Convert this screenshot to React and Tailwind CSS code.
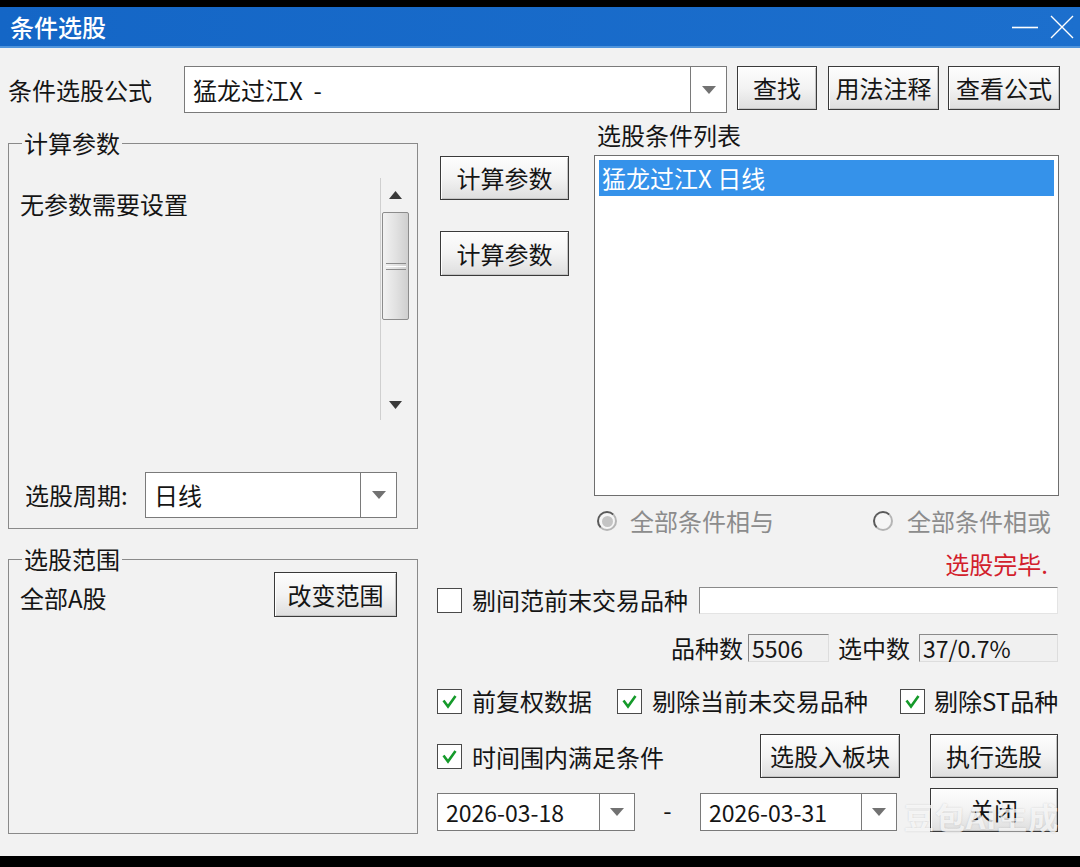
import React from "react";

function Btn({ children, className = "" }) {
  return (
    <div
      className={`flex items-center justify-center border border-[#3a3a3a] bg-gradient-to-b from-[#fdfdfd] via-[#f3f3f3] to-[#dedede] shadow-[inset_1px_1px_0_#ffffff,inset_-1px_-1px_0_#c4c4c4] text-[24px] leading-none text-[#151515] ${className}`}
    >
      {children}
    </div>
  );
}

function Arrow() {
  return (
    <svg width="14" height="8" viewBox="0 0 14 8">
      <path d="M0 0h14L7 8z" fill="#727272" />
    </svg>
  );
}

function Combo({ value, className = "", arrowW = "w-[36px]", textCls = "text-[24px]" }) {
  return (
    <div className={`flex border border-[#7a7a7a] bg-white ${className}`}>
      <div className={`flex-1 flex items-center pl-[8px] whitespace-pre ${textCls} text-[#151515]`}>{value}</div>
      <div className={`${arrowW} border-l border-[#7a7a7a] flex items-center justify-center`}>
        <Arrow />
      </div>
    </div>
  );
}

function Check({ checked }) {
  return (
    <div className="w-[25px] h-[25px] shrink-0 border border-[#4a4a4a] bg-white flex items-center justify-center">
      {checked && (
        <svg width="17" height="15" viewBox="0 0 17 15">
          <path d="M2.5 6.5L7 12.5L14.5 2" stroke="#159a2a" strokeWidth="2.6" fill="none" strokeLinejoin="miter" />
        </svg>
      )}
    </div>
  );
}

function Radio({ dot }) {
  return (
    <div className="w-[20px] h-[20px] shrink-0 rounded-full border-2 border-t-[#5a5a5a] border-l-[#5a5a5a] border-r-[#b5b5b5] border-b-[#b5b5b5] bg-[#f6f6f6] flex items-center justify-center">
      {dot && <div className="w-[11px] h-[11px] rounded-full bg-[#c4c4c4]" />}
    </div>
  );
}

export default function App() {
  return (
    <div className="relative w-[1080px] h-[867px] bg-black flex flex-col font-['Noto_Sans_CJK_SC','Noto_Sans',sans-serif] text-[#151515]">
      <div className="h-[7px] shrink-0" />
      {/* Title bar */}
      <div className="h-[41px] shrink-0 bg-gradient-to-r from-[#1466c6] to-[#1c6fcd] border-b-2 border-[#4f94dc] flex items-center justify-between pl-[10px] pr-[6px]">
        <span className="text-white text-[24px] leading-none font-medium">条件选股</span>
        <div className="flex items-center gap-[12px]">
          <svg width="26" height="24" viewBox="0 0 26 24">
            <path d="M0 12.5h26" stroke="#ffffff" strokeWidth="1.6" />
          </svg>
          <svg width="24" height="24" viewBox="0 0 24 24">
            <path d="M1 1L23 23M23 1L1 23" stroke="#ffffff" strokeWidth="1.4" />
          </svg>
        </div>
      </div>

      {/* Body */}
      <div className="h-[808px] shrink-0 bg-[#f2f2f2] pl-[8px] text-[24px] leading-[32px]">
        {/* Row 1 */}
        <div className="mt-[18px] h-[47px] flex items-start">
          <div className="w-[176px] h-[47px] flex items-center">条件选股公式</div>
          <Combo value={"猛龙过江X\u00a0\u00a0-"} className="w-[543px] h-[47px]" />
          <Btn className="ml-[10px] w-[80px] h-[44px]">查找</Btn>
          <Btn className="ml-[11px] w-[111px] h-[44px]">用法注释</Btn>
          <Btn className="ml-[9px] w-[112px] h-[44px]">查看公式</Btn>
        </div>

        <div className="flex">
          {/* Left column */}
          <div className="w-[410px] flex flex-col">
            <fieldset className="mt-[16px] h-[400px] border border-[#8a8a8a] pl-[11px]">
              <legend className="ml-[2px] px-[2px] leading-[28px]">计算参数</legend>
              <div className="mt-[21px] h-[242px] flex">
                <div className="flex-1 pt-[10px]">无参数需要设置</div>
                <div className="w-[30px] mr-[7px] border-l border-[#cfcfcf] flex flex-col">
                  <div className="h-[34px] flex items-center justify-center">
                    <svg width="13" height="8" viewBox="0 0 13 8">
                      <path d="M0 8h13L6.5 0z" fill="#3a3a3a" />
                    </svg>
                  </div>
                  <div className="mx-[1px] h-[108px] rounded-[2px] border border-[#8c8c8c] bg-gradient-to-r from-[#f2f2f2] via-[#e2e2e2] to-[#cfcfcf] flex flex-col items-center justify-center gap-[2px]">
                    <div className="w-[20px] h-[1px] bg-[#8c8c8c]" />
                    <div className="w-[20px] h-[1px] bg-[#ffffff]" />
                    <div className="w-[20px] h-[1px] bg-[#8c8c8c]" />
                  </div>
                  <div className="flex-1" />
                  <div className="h-[30px] flex items-center justify-center">
                    <svg width="13" height="8" viewBox="0 0 13 8">
                      <path d="M0 0h13L6.5 8z" fill="#3a3a3a" />
                    </svg>
                  </div>
                </div>
              </div>
              <div className="mt-[52px] h-[46px] flex items-center">
                <div className="ml-[5px] w-[120px]">选股周期:</div>
                <Combo value="日线" className="w-[252px] h-[46px]" />
              </div>
            </fieldset>

            <fieldset className="mt-[16px] h-[289px] border border-[#8a8a8a] pl-[11px]">
              <legend className="ml-[2px] px-[2px] leading-[28px]">选股范围</legend>
              <div className="flex items-start justify-between">
                <div className="mt-[9px]">全部A股</div>
                <Btn className="-mt-[1px] mr-[20px] w-[123px] h-[45px]">改变范围</Btn>
              </div>
            </fieldset>
          </div>

          {/* Right column */}
          <div className="ml-[19px] w-[622px] flex flex-col">
            <div className="flex">
              <div className="ml-[3px] w-[129px] flex flex-col">
                <Btn className="mt-[43px] h-[44px]">计算参数</Btn>
                <Btn className="mt-[31px] h-[45px]">计算参数</Btn>
              </div>
              <div className="ml-[25px] w-[465px] flex flex-col">
                <div className="mt-[6px] h-[32px] pl-[3px]">选股条件列表</div>
                <div className="mt-[4px] h-[341px] border border-[#6e6e6e] bg-white p-[4px]">
                  <div className="h-[36px] bg-[#3592ea] text-white pl-[3px] flex items-center">猛龙过江X 日线</div>
                </div>
              </div>
            </div>

            <div className="mt-[13px] h-[24px] flex items-center pl-[160px] text-[#8c8c8c]">
              <div className="w-[276px] flex items-center">
                <Radio dot />
                <span className="ml-[13px]">全部条件相与</span>
              </div>
              <Radio />
              <span className="ml-[14px]">全部条件相或</span>
            </div>

            <div className="mt-[15px] h-[32px] flex justify-end pr-[11px] text-[#d2202b]">选股完毕.</div>

            <div className="mt-[4px] h-[32px] flex items-center">
              <Check />
              <span className="ml-[10px]">剔间范前末交易品种</span>
              <div className="ml-auto mr-[1px] w-[359px] h-[27px] bg-white border-t border-l border-[#8a8a8a] border-r border-b border-r-[#e4e4e4] border-b-[#e4e4e4]" />
            </div>

            <div className="mt-[16px] h-[32px] flex items-center justify-end pr-[1px]">
              <span>品种数</span>
              <div className="ml-[5px] w-[81px] h-[28px] bg-[#f0f0f0] border-t border-l border-[#8a8a8a] border-r border-b border-r-[#dddddd] border-b-[#dddddd] pl-[3px] flex items-center text-[23px]">5506</div>
              <span className="ml-[9px]">选中数</span>
              <div className="ml-[9px] w-[139px] h-[28px] bg-[#f0f0f0] border-t border-l border-[#8a8a8a] border-r border-b border-r-[#dddddd] border-b-[#dddddd] pl-[3px] flex items-center text-[23px]">37/0.7%</div>
            </div>

            <div className="mt-[21px] h-[32px] flex items-center">
              <div className="w-[180px] flex items-center">
                <Check checked />
                <span className="ml-[10px]">前复权数据</span>
              </div>
              <div className="w-[283px] flex items-center">
                <Check checked />
                <span className="ml-[10px]">剔除当前未交易品种</span>
              </div>
              <div className="flex items-center">
                <Check checked />
                <span className="ml-[9px]">剔除ST品种</span>
              </div>
            </div>

            <div className="mt-[17px] h-[44px] flex items-center">
              <div className="w-[323px] flex items-center pt-[1px]">
                <Check checked />
                <span className="ml-[10px]">时间围内满足条件</span>
              </div>
              <Btn className="w-[140px] h-[44px]">选股入板块</Btn>
              <Btn className="ml-[30px] w-[128px] h-[44px]">执行选股</Btn>
            </div>

            <div className="mt-[10px] h-[44px] flex items-start">
              <Combo value="2026-03-18" className="mt-[5px] w-[198px] h-[38px]" arrowW="w-[35px]" textCls="text-[23px]" />
              <div className="w-[65px] h-[44px] flex items-center justify-center">-</div>
              <Combo value="2026-03-31" className="mt-[5px] w-[197px] h-[38px]" arrowW="w-[35px]" textCls="text-[23px]" />
              <Btn className="ml-[33px] w-[128px] h-[44px]">关闭</Btn>
            </div>
          </div>
        </div>
      </div>
      <div className="flex-1" />

      {/* watermark */}
      <div className="absolute left-[904px] top-[801px] text-[30px] font-bold leading-none text-white/75 tracking-[1px] [text-shadow:0_0_2px_rgba(0,0,0,0.15)]">
        豆包AI生成
      </div>
    </div>
  );
}
